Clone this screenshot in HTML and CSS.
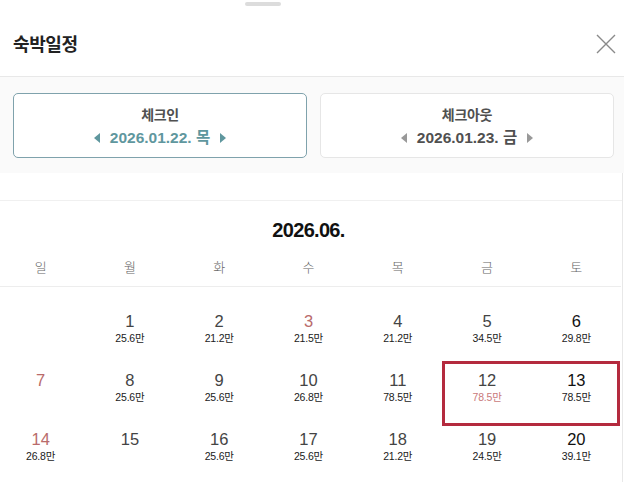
FILE: index.html
```html
<!DOCTYPE html>
<html lang="ko">
<head>
<meta charset="utf-8">
<link rel="stylesheet" href="styles.css">
</head>
<body>
<div class="sheet">
  <div class="handle"></div>
  <header class="head">
    <h1 class="title">숙박일정</h1>
    <button class="close" aria-label="닫기">
      <svg width="20" height="20" viewBox="0 0 20 20"><path d="M1 1 L19 19 M19 1 L1 19" stroke="#8a8a8a" stroke-width="1.4" fill="none"/></svg>
    </button>
  </header>
  <section class="dates">
    <div class="datebox active">
      <div class="label">체크인</div>
      <div class="value"><span class="tri left"></span><span>2026.01.22. 목</span><span class="tri right"></span></div>
    </div>
    <div class="datebox">
      <div class="label">체크아웃</div>
      <div class="value"><span class="tri left"></span><span>2026.01.23. 금</span><span class="tri right"></span></div>
    </div>
  </section>
  <section class="cal">
    <div class="calinner">
      <div class="month">2026.06.</div>
      <div class="weekdays">
        <span>일</span><span>월</span><span>화</span><span>수</span><span>목</span><span>금</span><span>토</span>
      </div>
      <div class="weeks">
        <div class="week">
          <div class="day"></div>
          <div class="day"><span class="n">1</span><span class="p">25.6만</span></div>
          <div class="day"><span class="n">2</span><span class="p">21.2만</span></div>
          <div class="day holiday"><span class="n">3</span><span class="p">21.5만</span></div>
          <div class="day"><span class="n">4</span><span class="p">21.2만</span></div>
          <div class="day"><span class="n">5</span><span class="p">34.5만</span></div>
          <div class="day sat"><span class="n">6</span><span class="p">29.8만</span></div>
        </div>
        <div class="week">
          <div class="day holiday"><span class="n">7</span></div>
          <div class="day"><span class="n">8</span><span class="p">25.6만</span></div>
          <div class="day"><span class="n">9</span><span class="p">25.6만</span></div>
          <div class="day"><span class="n">10</span><span class="p">26.8만</span></div>
          <div class="day"><span class="n">11</span><span class="p">78.5만</span></div>
          <div class="day"><span class="n">12</span><span class="p red">78.5만</span></div>
          <div class="day sat"><span class="n">13</span><span class="p">78.5만</span></div>
          <div class="range"></div>
        </div>
        <div class="week">
          <div class="day holiday"><span class="n">14</span><span class="p">26.8만</span></div>
          <div class="day"><span class="n">15</span></div>
          <div class="day"><span class="n">16</span><span class="p">25.6만</span></div>
          <div class="day"><span class="n">17</span><span class="p">25.6만</span></div>
          <div class="day"><span class="n">18</span><span class="p">21.2만</span></div>
          <div class="day"><span class="n">19</span><span class="p">24.5만</span></div>
          <div class="day sat"><span class="n">20</span><span class="p">39.1만</span></div>
        </div>
      </div>
    </div>
  </section>
</div>
</body>
</html>
```

FILE: styles.css
```css
* { box-sizing: border-box; }
html, body { margin: 0; padding: 0; background: #fff; }
body {
  font-family: "Liberation Sans", "Noto Sans CJK KR", sans-serif;
  color: #333;
  width: 624px;
  height: 482px;
  overflow: hidden;
}
.sheet { position: relative; width: 624px; }
.handle {
  width: 36px;
  height: 4px;
  margin: 2px 0 0 245px;
  background: #dcdcdc;
  border-radius: 2px;
}
.head {
  height: 71px;
  display: flex;
  align-items: center;
  justify-content: space-between;
  padding: 5px 8px 0 13px;
  border-bottom: 1px solid #e8e8e8;
}
.title {
  margin: 0;
  font-size: 18px;
  font-weight: 700;
  color: #222;
  letter-spacing: -0.4px;
  padding-bottom: 2px;
}
.close {
  border: 0;
  background: none;
  padding: 0;
  width: 20px;
  height: 20px;
  margin-right: 0;
  margin-bottom: 0;
  display: flex;
}
.dates {
  background: #fafafa;
  height: 96px;
  padding: 16px 10px 0 13px;
  display: flex;
  gap: 13px;
}
.datebox {
  flex: 1;
  height: 65px;
  background: #fff;
  border: 1px solid #e6e6e6;
  border-radius: 5px;
  display: flex;
  flex-direction: column;
  align-items: center;
  padding-top: 11px;
}
.datebox.active { border-color: #7fa2ac; }
.label {
  font-size: 14px;
  font-weight: 700;
  color: #505050;
  line-height: 20px;
  letter-spacing: -0.3px;
}
.value {
  display: flex;
  align-items: center;
  gap: 9px;
  font-size: 15.5px;
  font-weight: 700;
  color: #505050;
  line-height: 22px;
  margin-top: 2px;
}
.datebox.active .value { color: #5f979e; }
.tri {
  width: 0;
  height: 0;
  border-top: 5px solid transparent;
  border-bottom: 5px solid transparent;
}
.tri.left { border-right: 6px solid #999; margin-right: 1px; }
.tri.right { border-left: 6px solid #999; margin-left: 1px; }
.datebox.active .tri.left { border-right-color: #5f979e; }
.datebox.active .tri.right { border-left-color: #5f979e; }

.cal {
  padding-top: 27px;
  width: 623px;
  border-right: 1px solid #e8e8e8;
  height: 310px;
  overflow: hidden;
}
.calinner { border-top: 1px solid #f0f0f0; }
.month {
  text-align: center;
  font-size: 20px;
  font-weight: 700;
  color: #111;
  letter-spacing: -0.7px;
  line-height: 24px;
  margin-top: 17px;
  padding-right: 5px;
}
.weekdays {
  display: grid;
  grid-template-columns: repeat(7, 1fr);
  margin-left: -4px;
  width: 625px;
  margin-top: 16px;
  padding-bottom: 10px;
  border-bottom: 1px solid #ededed;
  font-size: 13px;
  line-height: 18px;
  color: #666;
  text-align: center;
  font-family: "Noto Sans CJK KR", sans-serif;
  font-weight: 300;
}
.weeks { padding-top: 15px; }
.week {
  position: relative;
  display: grid;
  grid-template-columns: repeat(7, 1fr);
  margin-left: -4px;
  width: 625px;
  height: 59px;
}
.day {
  display: flex;
  flex-direction: column;
  align-items: center;
  padding-top: 9px;
}
.n {
  font-size: 16.5px;
  line-height: 20px;
  color: #444;
}
.p {
  font-size: 10.5px;
  line-height: 14px;
  color: #1a1a1a;
  letter-spacing: -0.2px;
}
.p.red { color: #c9797b; }
.holiday .n { color: #b96b6b; }
.sat .n { color: #111; }
.range {
  position: absolute;
  left: calc(100% * 5 / 7);
  width: calc(100% * 2 / 7 - 1px);
  top: 0;
  height: 65px;
  border: 3px solid #b42a3e;
  pointer-events: none;
}
```
